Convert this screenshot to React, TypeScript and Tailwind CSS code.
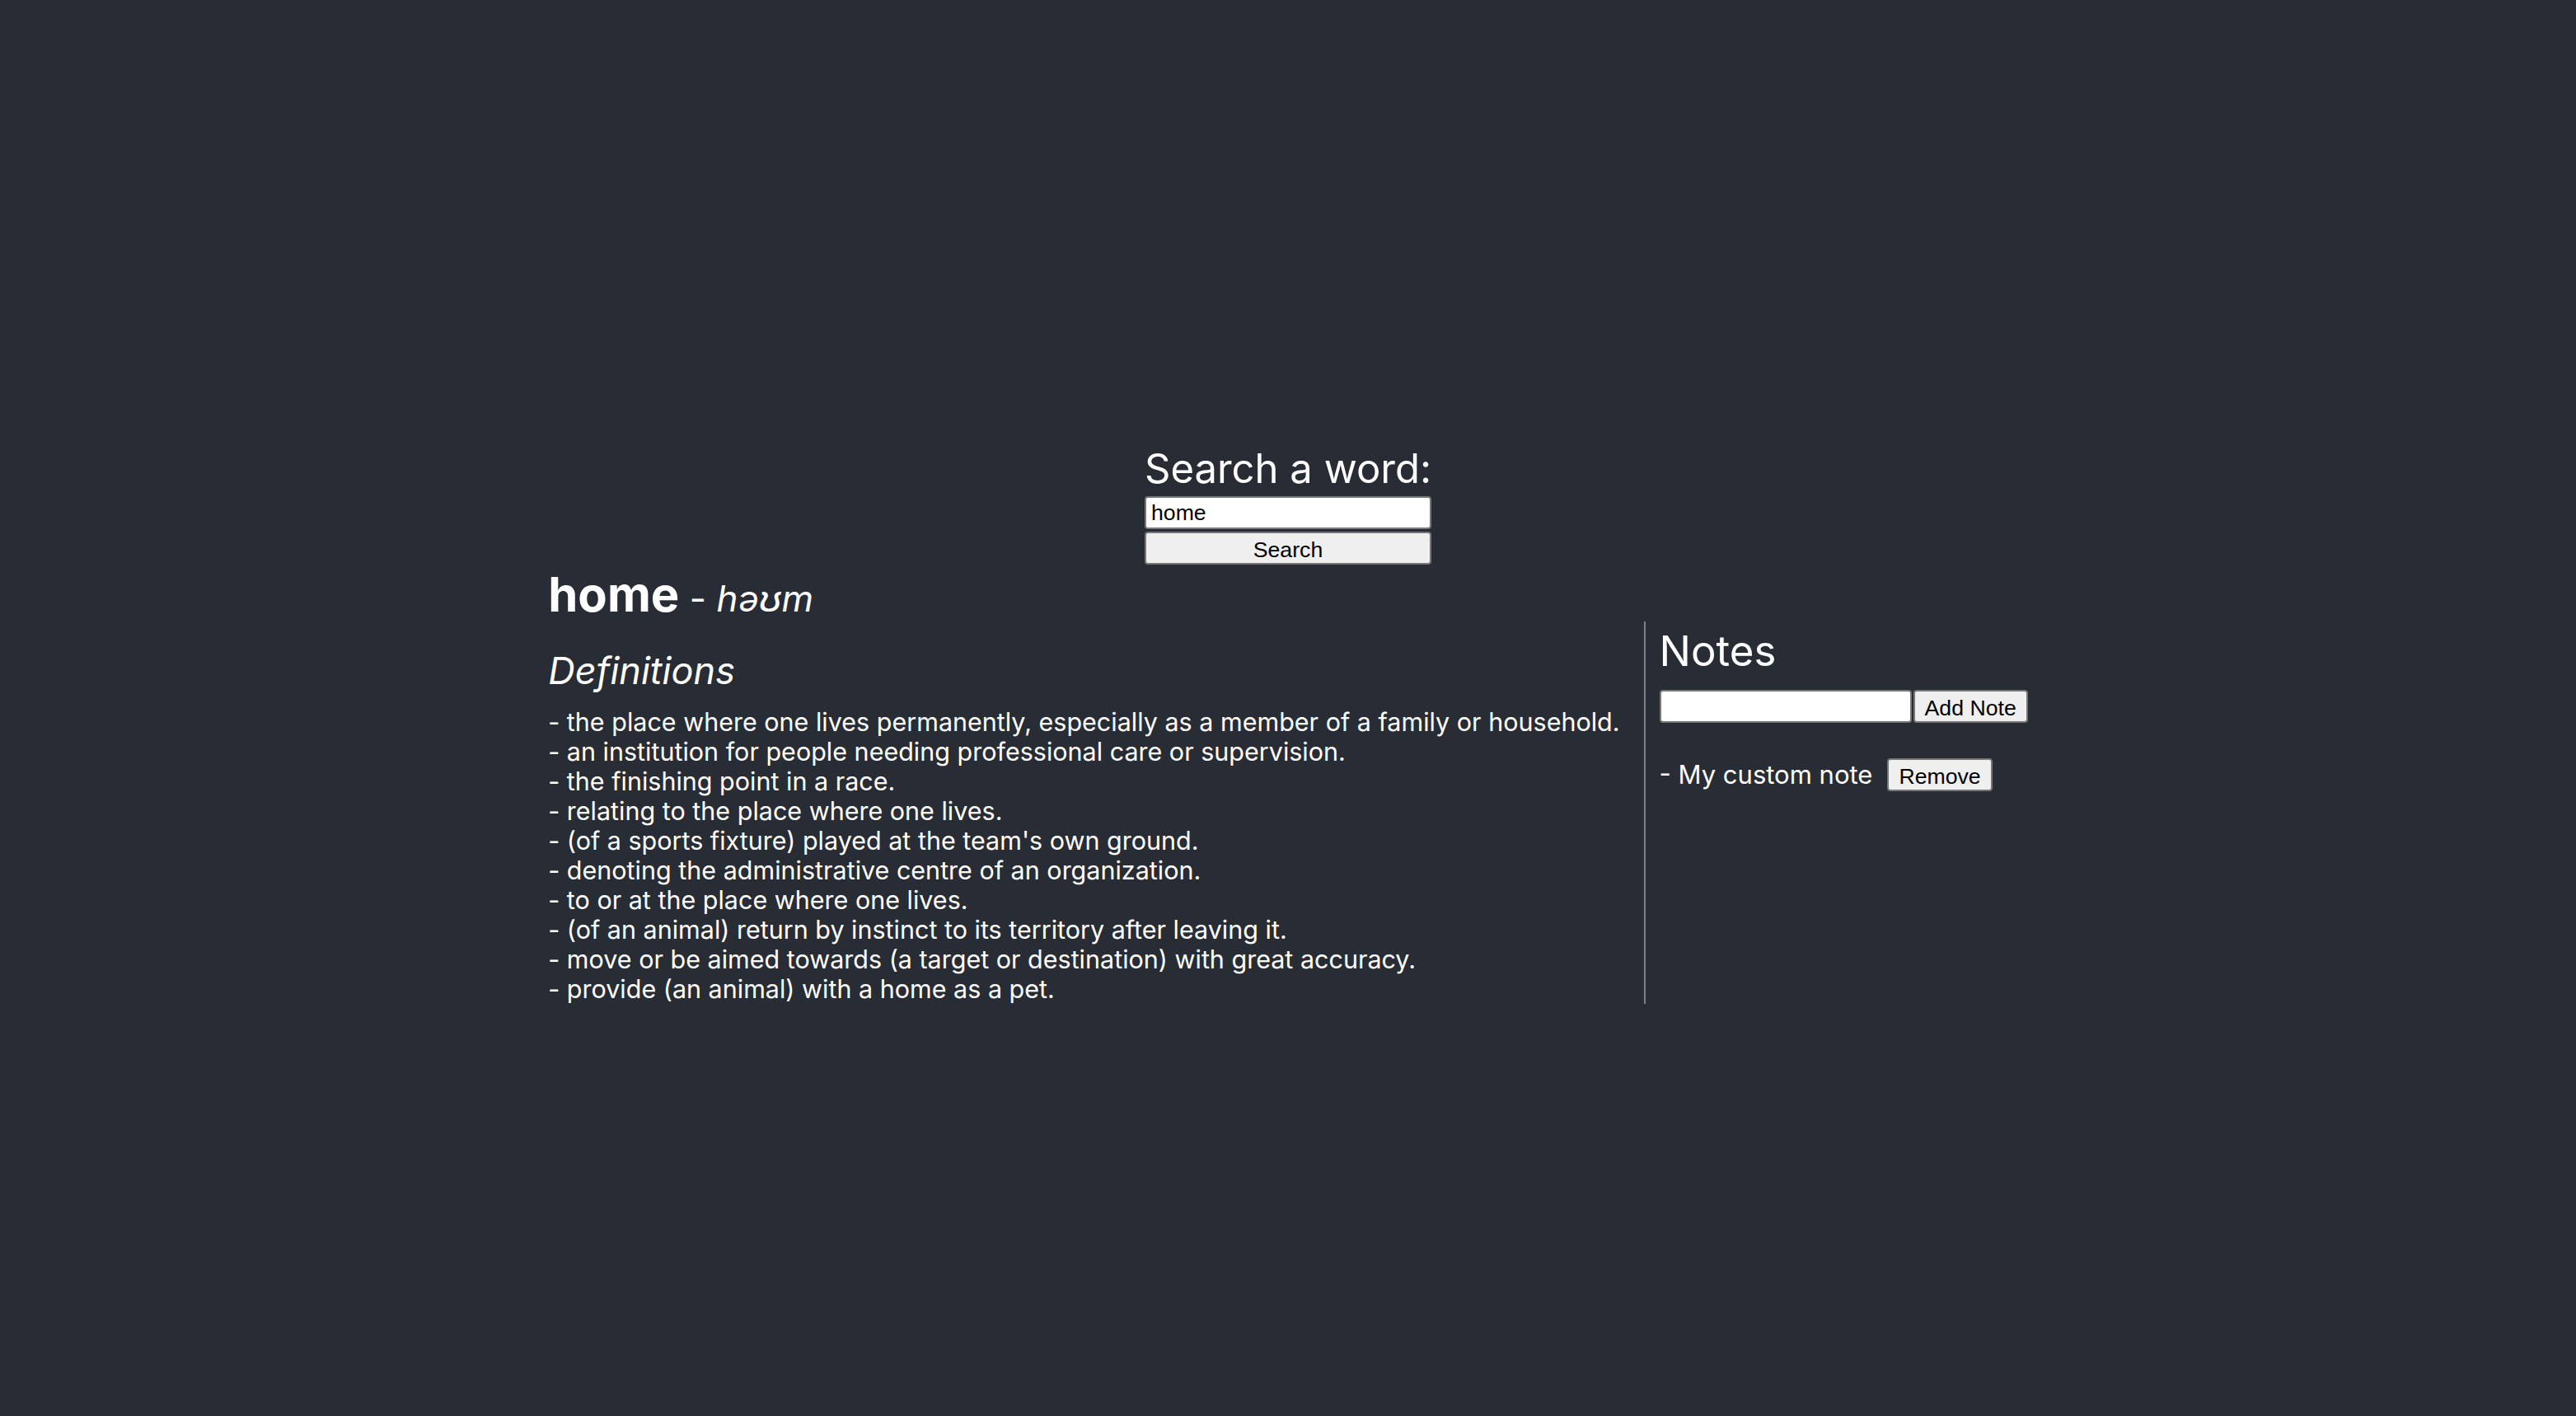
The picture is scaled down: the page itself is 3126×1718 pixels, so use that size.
import React from "react";

const defs = [
  "the place where one lives permanently, especially as a member of a family or household.",
  "an institution for people needing professional care or supervision.",
  "the finishing point in a race.",
  "relating to the place where one lives.",
  "(of a sports fixture) played at the team's own ground.",
  "denoting the administrative centre of an organization.",
  "to or at the place where one lives.",
  "(of an animal) return by instinct to its territory after leaving it.",
  "move or be aimed towards (a target or destination) with great accuracy.",
  "provide (an animal) with a home as a pet.",
];

const ctrlFont = { fontFamily: '"Liberation Sans", Arial, sans-serif' };

export default function App() {
  return (
    <div
      className="min-h-screen bg-[#282c34] text-white flex flex-col items-center pt-[538px]"
      style={{ fontFamily: 'Inter, "Noto Sans", sans-serif' }}
    >
      <div className="flex flex-col items-center">
        <h2 className="text-[49px] leading-[61px] font-normal">Search a word:</h2>
        <input
          defaultValue="home"
          className="mt-[3px] w-[348px] h-[40px] bg-white text-black border-2 border-[#767676] rounded-[4px] px-[6px] text-[26.67px] outline-none"
          style={ctrlFont}
        />
        <button
          className="mt-[3px] w-[348px] h-[40px] bg-[#efefef] text-black border-2 border-[#767676] rounded-[4px] text-[26.67px]"
          style={ctrlFont}
        >
          Search
        </button>
      </div>
      <div className="mt-[7px] flex flex-col">
        <div className="h-[62px] flex items-baseline whitespace-pre">
          <span className="text-[58px] leading-none font-bold">home</span>
          <span className="text-[44px] leading-none">
            {" - "}
            <i>həʊm</i>
          </span>
        </div>
        <div className="flex">
          <div className="pr-[29px] border-r-2 border-[#808080]">
            <h3 className="mt-[33px] text-[45px] leading-[54px] italic font-normal">Definitions</h3>
            <ul className="mt-[17px] text-[30.5px] leading-[36px]">
              {defs.map((d) => (
                <li key={d} className="whitespace-nowrap">- {d}</li>
              ))}
            </ul>
          </div>
          <div className="pl-[17px]">
            <h2 className="mt-[4px] text-[51px] leading-[63px] font-normal">Notes</h2>
            <div className="mt-[16px] flex">
              <input
                className="w-[306px] h-[40px] bg-white text-black border-2 border-[#767676] rounded-[4px] px-[6px] text-[26.67px] outline-none"
                style={ctrlFont}
              />
              <button
                className="ml-[2px] h-[40px] px-[12px] bg-[#efefef] text-black border-2 border-[#767676] rounded-[4px] text-[26.67px]"
                style={ctrlFont}
              >
                Add Note
              </button>
            </div>
            <div className="mt-[40px] flex items-center gap-[18px]">
              <span className="text-[31px]">- My custom note</span>
              <button
                className="h-[40px] px-[12px] bg-[#efefef] text-black border-2 border-[#767676] rounded-[4px] text-[26.67px]"
                style={ctrlFont}
              >
                Remove
              </button>
            </div>
          </div>
        </div>
      </div>
    </div>
  );
}
